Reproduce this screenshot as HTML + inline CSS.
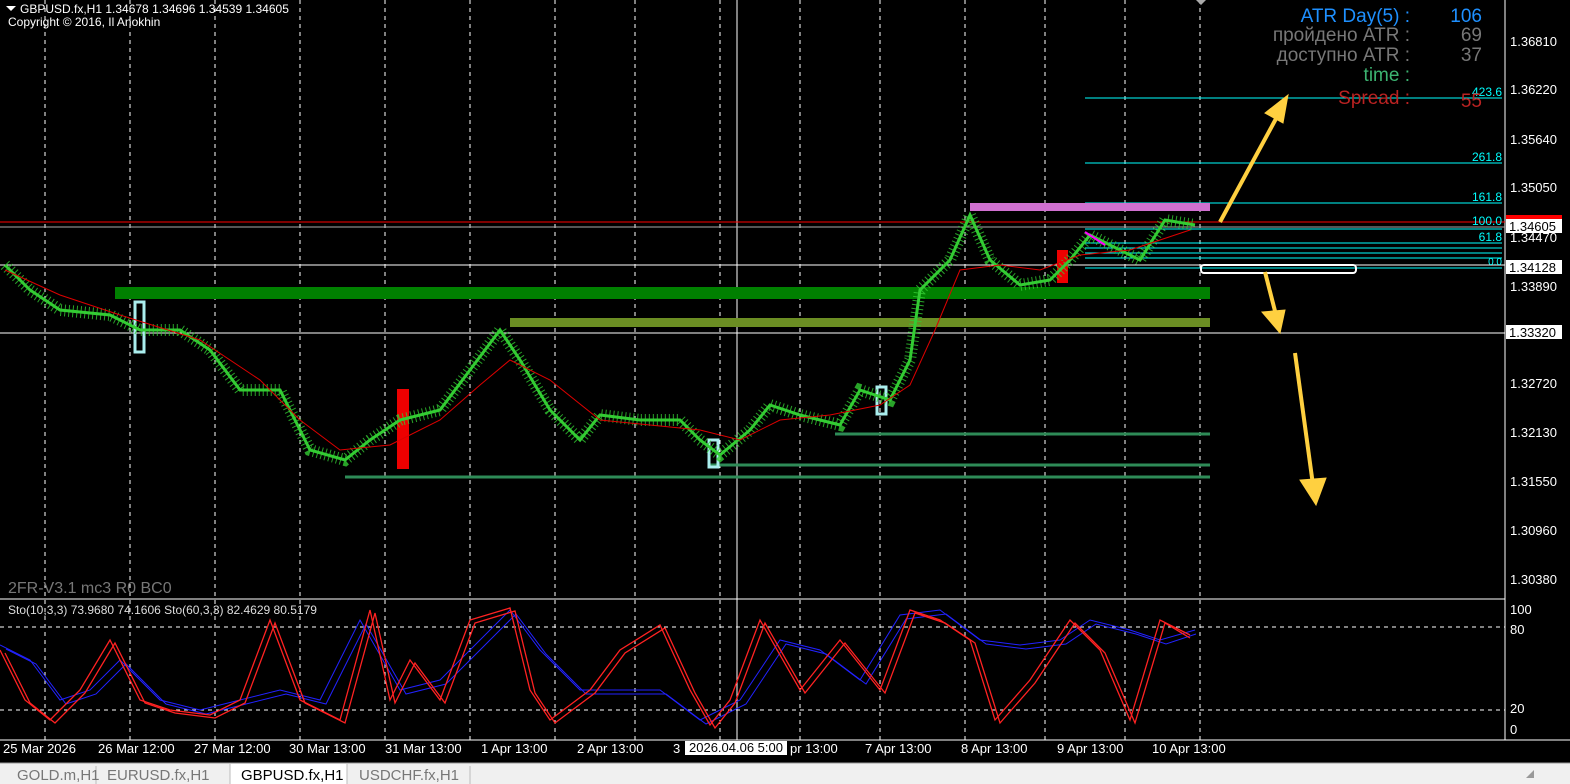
<!DOCTYPE html><html><head><style>
body{margin:0;width:1570px;height:784px;background:#000;overflow:hidden;font-family:"Liberation Sans",sans-serif}
svg{position:absolute;left:0;top:0}
</style></head><body>
<svg width="1570" height="784" viewBox="0 0 1570 784" font-family="Liberation Sans, sans-serif">
<rect width="1570" height="784" fill="#000"/>
<g stroke="#fff" stroke-dasharray="4,4" stroke-width="1">
<line x1="45" y1="0" x2="45" y2="740"/><line x1="130" y1="0" x2="130" y2="740"/><line x1="215" y1="0" x2="215" y2="740"/><line x1="300" y1="0" x2="300" y2="740"/><line x1="385" y1="0" x2="385" y2="740"/><line x1="470" y1="0" x2="470" y2="740"/><line x1="555" y1="0" x2="555" y2="740"/><line x1="635" y1="0" x2="635" y2="740"/><line x1="720" y1="0" x2="720" y2="740"/><line x1="800" y1="0" x2="800" y2="740"/><line x1="880" y1="0" x2="880" y2="740"/><line x1="965" y1="0" x2="965" y2="740"/><line x1="1045" y1="0" x2="1045" y2="740"/><line x1="1125" y1="0" x2="1125" y2="740"/><line x1="1200" y1="0" x2="1200" y2="740"/>
<line x1="0" y1="627" x2="1505" y2="627"/><line x1="0" y1="710" x2="1505" y2="710"/>
</g>
<line x1="737" y1="0" x2="737" y2="740" stroke="#fff"/>
<line x1="1505" y1="0" x2="1505" y2="740" stroke="#fff"/>
<line x1="0" y1="599" x2="1505" y2="599" stroke="#fff"/>
<line x1="0" y1="740" x2="1570" y2="740" stroke="#fff"/>
<g fill="#fff" font-size="13">
<text x="1510" y="46">1.36810</text><text x="1510" y="94">1.36220</text><text x="1510" y="144">1.35640</text><text x="1510" y="192">1.35050</text><text x="1510" y="242">1.34470</text><text x="1510" y="291">1.33890</text><text x="1510" y="388">1.32720</text><text x="1510" y="437">1.32130</text><text x="1510" y="486">1.31550</text><text x="1510" y="535">1.30960</text><text x="1510" y="584">1.30380</text>
<text x="1510" y="614">100</text><text x="1510" y="634">80</text><text x="1510" y="713">20</text><text x="1510" y="734">0</text>
</g>
<rect x="1506" y="215" width="56" height="4" fill="#f00"/>
<rect x="1506" y="219" width="56" height="14" fill="#fff"/><text x="1509" y="231" font-size="13" fill="#000">1.34605</text>
<rect x="1506" y="260" width="56" height="14" fill="#fff"/><text x="1509" y="272" font-size="13" fill="#000">1.34128</text>
<rect x="1506" y="325" width="56" height="14" fill="#fff"/><text x="1509" y="337" font-size="13" fill="#000">1.33320</text>
<line x1="0" y1="222" x2="1505" y2="222" stroke="#f00"/>
<line x1="0" y1="227" x2="1505" y2="227" stroke="#aaa"/>
<line x1="0" y1="265" x2="1505" y2="265" stroke="#fff"/>
<line x1="0" y1="333" x2="1505" y2="333" stroke="#fff"/>
<g stroke="#0ff"><line x1="1085" y1="98" x2="1502" y2="98"/><line x1="1085" y1="163" x2="1502" y2="163"/><line x1="1085" y1="203" x2="1502" y2="203"/><line x1="1085" y1="229" x2="1502" y2="229"/><line x1="1085" y1="243" x2="1502" y2="243"/><line x1="1085" y1="248" x2="1502" y2="248"/><line x1="1085" y1="253" x2="1502" y2="253"/><line x1="1085" y1="258" x2="1502" y2="258"/><line x1="1085" y1="268" x2="1502" y2="268"/></g>
<g fill="#0ff" font-size="12" text-anchor="end"><text x="1502" y="96">423.6</text><text x="1502" y="161">261.8</text><text x="1502" y="201">161.8</text><text x="1502" y="225">100.0</text><text x="1502" y="241">61.8</text><text x="1502" y="265" font-size="10">0.0</text></g>
<rect x="970" y="203" width="240" height="8" fill="#d070d0"/>
<rect x="115" y="287" width="1095" height="12" fill="#008000"/>
<rect x="510" y="318" width="700" height="9" fill="#6b8e23"/>
<g stroke="#2e8b57" stroke-width="3"><line x1="835" y1="434" x2="1210" y2="434"/><line x1="710" y1="465" x2="1210" y2="465"/><line x1="345" y1="477" x2="1210" y2="477"/></g>
<rect x="1201" y="265" width="155" height="8" rx="3" fill="none" stroke="#fff" stroke-width="2"/>
<rect x="397" y="389" width="12" height="80" fill="#e00"/><rect x="1057" y="250" width="11" height="33" fill="#e00"/>
<g fill="none" stroke="#aee" stroke-width="3"><rect x="135" y="302" width="9" height="50"/><rect x="709" y="440" width="9" height="27"/><rect x="877" y="387" width="9" height="27"/></g>
<polyline fill="none" stroke="#3c3" stroke-width="3" points="5,265 30,290 60,310 110,315 140,330 180,330 210,350 240,390 280,390 310,450 345,460 370,440 400,420 440,410 470,370 500,330 520,360 550,410 580,440 600,415 640,420 680,420 700,440 720,455 750,430 770,405 800,415 840,425 860,390 890,400 910,360 920,290 950,260 970,215 990,260 1020,285 1050,280 1070,260 1090,235 1140,260 1165,220 1195,225"/>
<polyline fill="none" stroke="#3c3" stroke-width="12" stroke-dasharray="1,3" opacity="0.8" points="5,265 30,290 60,310 110,315 140,330 180,330 210,350 240,390 280,390 310,450 345,460 370,440 400,420 440,410 470,370 500,330 520,360 550,410 580,440 600,415 640,420 680,420 700,440 720,455 750,430 770,405 800,415 840,425 860,390 890,400 910,360 920,290 950,260 970,215 990,260 1020,285 1050,280 1070,260 1090,235 1140,260 1165,220 1195,225"/>
<polyline fill="none" stroke="#d00" stroke-width="1" points="5,270 60,295 120,315 200,340 260,380 300,420 340,450 390,445 440,420 480,385 510,360 550,380 600,420 650,425 700,430 740,440 780,420 830,415 880,405 910,385 935,330 960,270 1000,265 1040,270 1080,255 1130,250 1190,230"/>
<line x1="1085" y1="232" x2="1105" y2="245" stroke="#f0f" stroke-width="2"/>
<g stroke="#ffd040" stroke-width="4" fill="#ffd040"><line x1="1220" y1="222" x2="1278" y2="115"/><polygon points="1288,95 1265,113 1283,123" stroke-width="1"/><line x1="1265" y1="272" x2="1276" y2="315"/><polygon points="1280,333 1262,312 1285,310" stroke-width="1"/><line x1="1295" y1="353" x2="1313" y2="485"/><polygon points="1316,505 1300,480 1326,478" stroke-width="1"/></g>
<g fill="none" stroke="#22f">
<polyline points="0,645 30,660 60,700 90,690 120,660 160,700 200,710 240,700 280,690 320,700 360,620 400,690 440,680 480,640 510,610 540,650 580,690 620,690 660,690 700,720 740,700 780,640 820,650 860,680 900,615 940,610 980,640 1020,645 1060,640 1090,620 1130,630 1160,640 1195,630"/>
<polyline transform="translate(6,4)" points="0,645 30,660 60,700 90,690 120,660 160,700 200,710 240,700 280,690 320,700 360,620 400,690 440,680 480,640 510,610 540,650 580,690 620,690 660,690 700,720 740,700 780,640 820,650 860,680 900,615 940,610 980,640 1020,645 1060,640 1090,620 1130,630 1160,640 1190,630"/></g>
<g fill="none" stroke="#f22" stroke-width="1.3">
<polyline points="0,650 25,700 50,720 80,690 110,640 140,700 170,710 210,715 240,700 270,620 300,700 340,720 370,610 390,700 410,660 440,700 470,620 510,608 530,690 550,720 590,690 620,650 660,625 690,690 710,725 730,700 760,620 800,690 840,640 880,690 910,610 940,620 970,640 995,720 1030,680 1070,620 1100,650 1130,720 1160,620 1190,635"/>
<polyline transform="translate(5,3)" points="0,650 25,700 50,720 80,690 110,640 140,700 170,710 210,715 240,700 270,620 300,700 340,720 370,610 390,700 410,660 440,700 470,620 510,608 530,690 550,720 590,690 620,650 660,625 690,690 710,725 730,700 760,620 800,690 840,640 880,690 910,610 940,620 970,640 995,720 1030,680 1070,620 1100,650 1130,720 1160,620 1185,635"/></g>
<text x="8" y="614" fill="#ddd" font-size="12">Sto(10,3,3) 73.9680 74.1606  Sto(60,3,3) 82.4629 80.5179</text>
<polygon points="6,6 16,6 11,11" fill="#fff"/>
<text x="20" y="13" fill="#fff" font-size="12">GBPUSD.fx,H1  1.34678 1.34696 1.34539 1.34605</text>
<text x="8" y="26" fill="#fff" font-size="12">Copyright © 2016, Il Anokhin</text>
<text x="8" y="593" fill="#777" font-size="16">2FR-V3.1 mc3 R0 BC0</text>
<g font-size="19" text-anchor="end"><text x="1410" y="22" fill="#1e90ff">ATR Day(5) :</text><text x="1482" y="22" fill="#1e90ff">106</text>
<text x="1410" y="41" fill="#777">пройдено ATR :</text><text x="1482" y="41" fill="#777">69</text>
<text x="1410" y="61" fill="#777">доступно ATR :</text><text x="1482" y="61" fill="#777">37</text>
<text x="1410" y="81" fill="#3cb371">time :</text>
<text x="1410" y="104" fill="#b22">Spread :</text><text x="1482" y="107" fill="#b22">55</text></g>
<polygon points="1196,0 1206,0 1201,5" fill="#aaa"/>
<g fill="#fff" font-size="13"><text x="3" y="753">25 Mar 2026</text><text x="98" y="753">26 Mar 12:00</text><text x="194" y="753">27 Mar 12:00</text><text x="289" y="753">30 Mar 13:00</text><text x="385" y="753">31 Mar 13:00</text><text x="481" y="753">1 Apr 13:00</text><text x="577" y="753">2 Apr 13:00</text><text x="673" y="753">3</text><text x="790" y="753">pr 13:00</text><text x="865" y="753">7 Apr 13:00</text><text x="961" y="753">8 Apr 13:00</text><text x="1057" y="753">9 Apr 13:00</text><text x="1152" y="753">10 Apr 13:00</text></g>
<rect x="685" y="741" width="102" height="14" fill="#fff"/><text x="689" y="752" font-size="13" fill="#000">2026.04.06 5:00</text>
<rect x="0" y="763" width="1570" height="21" fill="#f0f0f0"/>
<line x1="0" y1="763" x2="1570" y2="763" stroke="#999"/>
<rect x="230" y="764" width="117" height="20" fill="#fff"/>
<g stroke="#bbb"><line x1="96" y1="766" x2="96" y2="784"/><line x1="230" y1="764" x2="230" y2="784"/><line x1="347" y1="764" x2="347" y2="784"/><line x1="470" y1="766" x2="470" y2="784"/></g>
<g font-size="15" fill="#777"><text x="17" y="780">GOLD.m,H1</text><text x="107" y="780">EURUSD.fx,H1</text><text x="241" y="780" fill="#000">GBPUSD.fx,H1</text><text x="359" y="780">USDCHF.fx,H1</text></g>
<polygon points="1526,778 1534,778 1534,770" fill="#999"/>
</svg>
</body></html>
